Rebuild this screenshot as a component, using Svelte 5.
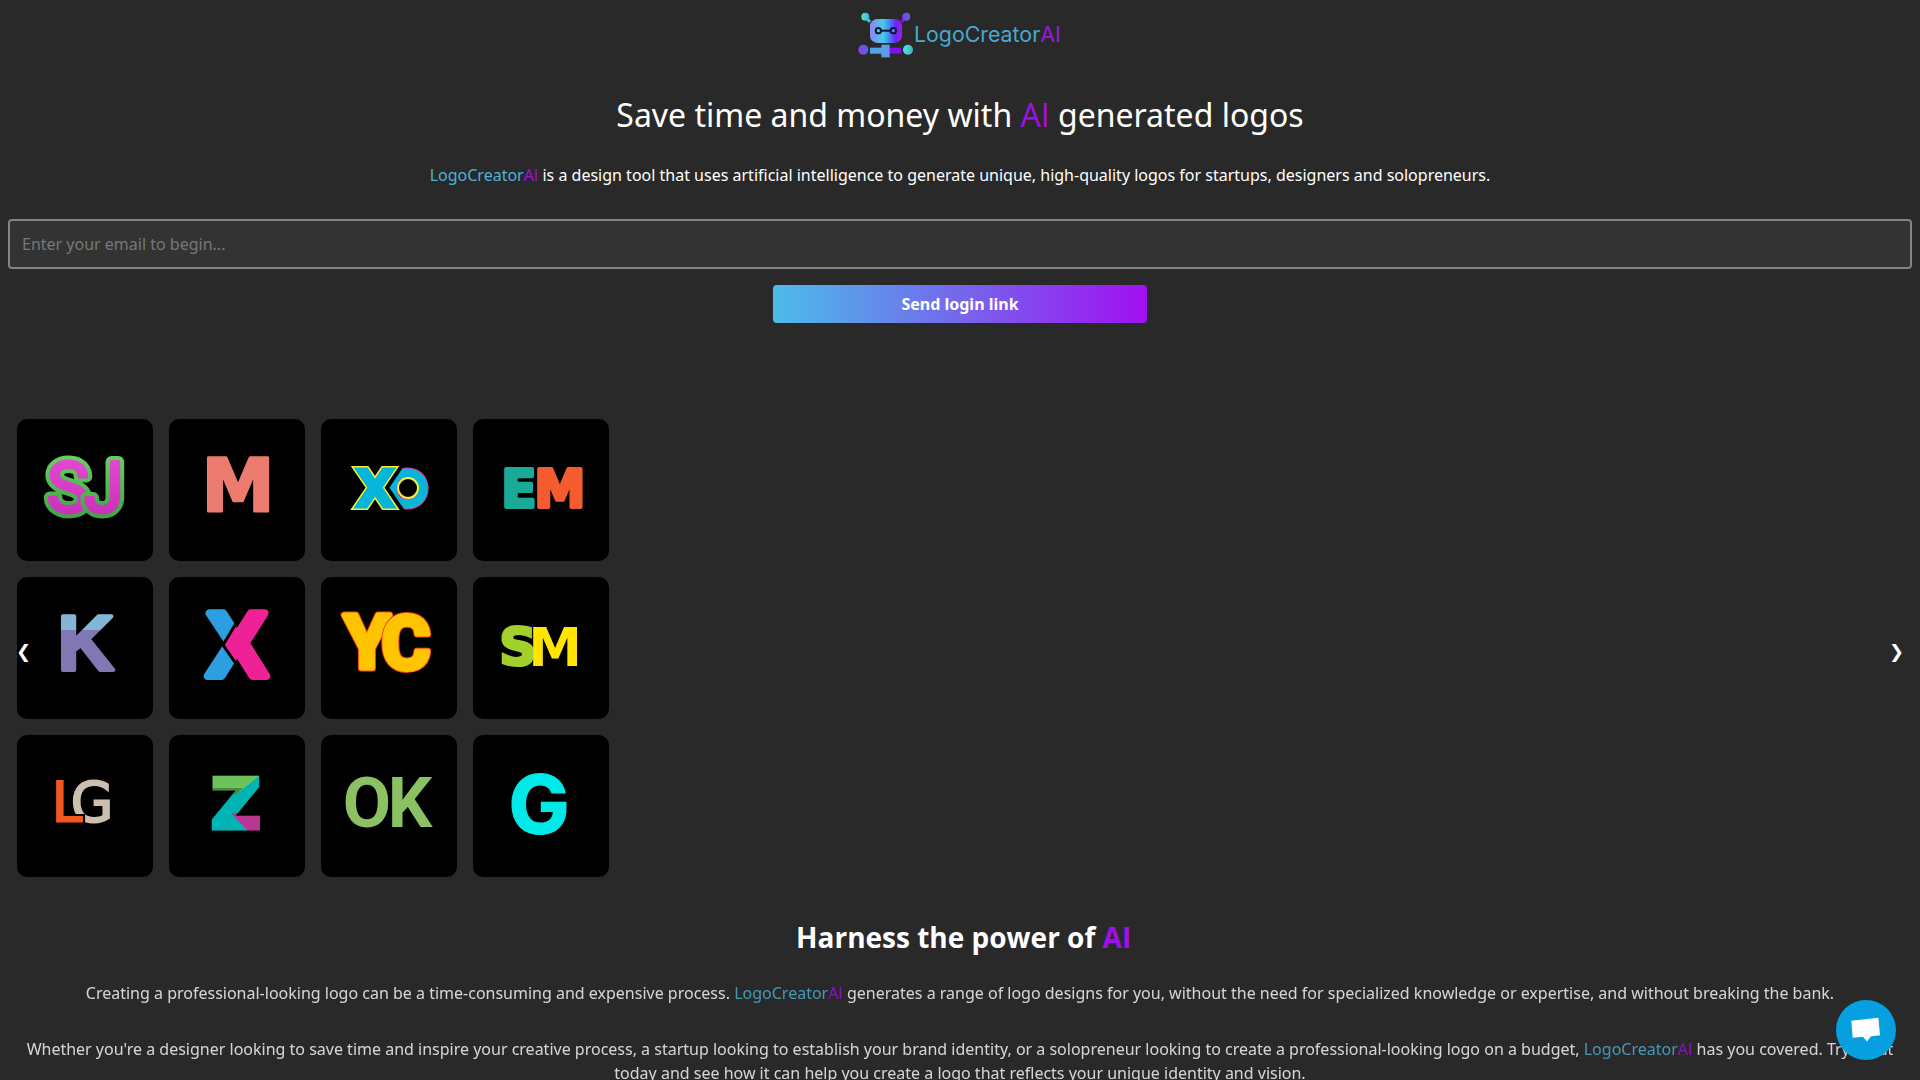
<script>
  let email = "";
  let sent = false;

  function sendLink() {
    sent = email.length > 0;
  }
</script>

{#snippet brand()}<span class="blue">LogoCreator</span><span class="purple">AI</span>{/snippet}

<main>
  <header>
    <svg class="brand" viewBox="54 30 615 150" role="img" aria-label="LogoCreatorAI">
      <defs>
        <linearGradient id="head">
          <stop offset="0" stop-color="#8b87f2" />
          <stop offset="0.4" stop-color="#4cc9ea" />
          <stop offset="0.55" stop-color="#3d9df0" />
          <stop offset="0.8" stop-color="#6a25f5" />
          <stop offset="1" stop-color="#a41af0" />
        </linearGradient>
        <linearGradient id="violet">
          <stop offset="0" stop-color="#8c3ff0" />
          <stop offset="1" stop-color="#5a5fe0" />
        </linearGradient>
        <linearGradient id="teal">
          <stop offset="0" stop-color="#5fe3d0" />
          <stop offset="1" stop-color="#35b5cf" />
        </linearGradient>
      </defs>
      <path d="M76 50 L90 66" stroke="#43c3d3" stroke-width="9" />
      <path d="M199 50 L184 66" stroke="#6a22dc" stroke-width="9" />
      <circle cx="76" cy="50" r="12" fill="url(#teal)" />
      <circle cx="199" cy="50" r="12" fill="url(#violet)" />
      <rect x="90" y="57" width="96" height="72" rx="22" fill="url(#head)" />
      <path d="M115 92 H160" stroke="#10163a" stroke-width="6" />
      <circle cx="115" cy="92" r="8" fill="#4bc4ee" stroke="#10163a" stroke-width="6" />
      <circle cx="160" cy="92" r="8" fill="#5d7ff2" stroke="#10163a" stroke-width="6" />
      <rect x="90" y="143" width="36" height="18" fill="#53a4e6" />
      <rect x="148" y="143" width="36" height="18" fill="#8110ee" />
      <rect x="124" y="134" width="25" height="38" fill="#5f9be8" />
      <circle cx="70" cy="149" r="15" fill="url(#violet)" />
      <circle cx="204" cy="149" r="15" fill="url(#teal)" />
      <text class="wordmark" x="222" y="126" fill="#4aa8d0">LogoCreator<tspan fill="#9a18dc">AI</tspan></text>
    </svg>
  </header>

  <section class="hero">
    <h1>Save time and money with <span class="purple">AI</span> generated logos</h1>
    <p>{@render brand()} is a design tool that uses artificial intelligence to generate unique, high-quality logos for startups, designers and solopreneurs.</p>
    <form on:submit|preventDefault={sendLink}>
      <input type="email" aria-label="Email" placeholder="Enter your email to begin..." bind:value={email} />
      <button class="send" type="submit">Send login link</button>
    </form>
  </section>

  <section class="slider" aria-label="Example logos">
    <div class="logos">
      <svg class="card" viewBox="0 0 136 142">
        <defs>
          <linearGradient id="sj-edge" x2="0" y2="1">
            <stop offset="0" stop-color="#6bd862" />
            <stop offset="1" stop-color="#3a9c40" />
          </linearGradient>
          <linearGradient id="sj-fill" x2="0" y2="1">
            <stop offset="0" stop-color="#ea4fd5" />
            <stop offset="1" stop-color="#c32bb4" />
          </linearGradient>
        </defs>
        <g class="roboto regular round" text-anchor="middle" font-size="71">
          <text x="51" y="93" stroke="url(#sj-edge)" stroke-width="12">S</text>
          <text x="51" y="93" fill="url(#sj-fill)" stroke="url(#sj-fill)" stroke-width="4">S</text>
          <text x="87" y="93" stroke="url(#sj-edge)" stroke-width="12">J</text>
          <text x="87" y="93" fill="url(#sj-fill)" stroke="url(#sj-fill)" stroke-width="4">J</text>
        </g>
      </svg>

      <svg class="card" viewBox="0 0 136 142">
        <text class="dejavu round" x="69" y="92" text-anchor="middle" font-size="73" fill="#ec7c70" stroke="#ec7c70" stroke-width="3">M</text>
      </svg>

      <svg class="card" viewBox="0 0 136 142">
        <g text-anchor="middle">
          <text class="lato" x="86" y="88" font-size="52" fill="#06b5d8" stroke="#e63ab0" stroke-width="5">O</text>
          <text class="lato" x="86" y="88" font-size="52" fill="#06b5d8" stroke="#06b5d8" stroke-width="3">O</text>
          <circle cx="87" cy="69" r="10" fill="#000" stroke="#f5f032" stroke-width="2" />
          <text class="dejavu" x="57" y="88" font-size="52" stroke="#000" stroke-width="9">X</text>
          <text class="dejavu" x="54" y="88" font-size="52" fill="#06b5d8" stroke="#f5f032" stroke-width="6">X</text>
          <text class="dejavu" x="54" y="88" font-size="52" fill="#06b5d8" stroke="#06b5d8" stroke-width="3">X</text>
        </g>
      </svg>

      <svg class="card" viewBox="0 0 136 142">
        <g class="dejavu round" text-anchor="middle" font-size="51" stroke-width="4">
          <text x="46" y="88" fill="#1aab98" stroke="#1aab98">E</text>
          <text x="87" y="88" fill="#f45c30" stroke="#f45c30">M</text>
        </g>
      </svg>

      <svg class="card" viewBox="0 0 136 142">
        <defs>
          <linearGradient id="k-fill" gradientUnits="userSpaceOnUse" x1="0" y1="0" x2="0" y2="142">
            <stop offset="0.37" stop-color="#82b5d6" />
            <stop offset="0.37" stop-color="#8078b4" />
          </linearGradient>
        </defs>
        <text class="liberation round" x="69" y="93" text-anchor="middle" font-size="78" fill="url(#k-fill)" stroke="url(#k-fill)" stroke-width="4">K</text>
      </svg>

      <svg class="card" viewBox="0 0 136 142">
        <mask id="x-mask" maskUnits="userSpaceOnUse" x="0" y="0" width="136" height="142">
          <text class="liberation round" x="68" y="99" text-anchor="middle" font-size="90" fill="#fff" stroke="#fff" stroke-width="8">X</text>
        </mask>
        <g mask="url(#x-mask)">
          <rect width="136" height="142" fill="#2b9fe2" />
          <path d="M80 25 L54 68 L86 114 H120 V25 Z" fill="#ee2196" stroke="#000" stroke-width="3" />
        </g>
      </svg>

      <svg class="card" viewBox="0 0 136 142">
        <g class="roboto round" text-anchor="middle" font-size="74">
          <text x="46" y="91" stroke="#ee4a10" stroke-width="7">Y</text>
          <text x="46" y="91" fill="#ffc400" stroke="#ffc400" stroke-width="5">Y</text>
          <text x="85" y="92" stroke="#ee4a10" stroke-width="7">C</text>
          <text x="85" y="92" fill="#ffc400" stroke="#ffc400" stroke-width="5">C</text>
        </g>
      </svg>

      <svg class="card" viewBox="0 0 136 142">
        <g class="dejavu" text-anchor="middle" stroke-width="3">
          <text x="45" y="88" font-size="52" fill="#a4d02c" stroke="#a4d02c">S</text>
          <text x="82" y="89" font-size="54" fill="#ffe500">M</text>
        </g>
      </svg>

      <svg class="card" viewBox="0 0 136 142">
        <g class="thin" text-anchor="middle" font-size="55">
          <text x="75" y="86" fill="#cdbfb0" stroke="#cdbfb0" stroke-width="2">G</text>
          <text x="50" y="86" stroke="#000" stroke-width="6">L</text>
          <text x="50" y="86" fill="#f2581f" stroke="#f2581f" stroke-width="2">L</text>
        </g>
      </svg>

      <svg class="card" viewBox="0 0 136 142">
        <mask id="z-mask" maskUnits="userSpaceOnUse" x="0" y="0" width="136" height="142">
          <text class="dejavu" x="67" y="93" text-anchor="middle" font-size="68" fill="#fff" stroke="#fff" stroke-width="5">Z</text>
        </mask>
        <g mask="url(#z-mask)">
          <rect width="136" height="142" fill="#00b3b5" />
          <path d="M40 36 H96 L68 59 H40 Z" fill="#6cc35c" />
          <path d="M40 53 H74 L68 59 H40 Z" fill="#468e42" />
          <path d="M62 78 H96 V98 H81 Z" fill="#b93692" />
        </g>
      </svg>

      <svg class="card" viewBox="0 0 136 142">
        <g class="roboto" text-anchor="middle" font-size="70">
          <text x="46" y="92" fill="#8bc163">O</text>
          <text x="89" y="92" fill="#8bc163">K</text>
        </g>
      </svg>

      <svg class="card" viewBox="0 0 136 142">
        <text class="inter" x="66" y="99" text-anchor="middle" font-size="82" fill="#00e8e8">G</text>
      </svg>
    </div>
    <button class="arrow prev" type="button" aria-label="Previous">❮</button>
    <button class="arrow next" type="button" aria-label="Next">❯</button>
  </section>

  <section class="about">
    <h2>&nbsp;Harness the power of <span class="purple">AI</span></h2>
    <p>Creating a professional-looking logo can be a time-consuming and expensive process. {@render brand()} generates a range of logo designs for you, without the need for specialized knowledge or expertise, and without breaking the bank.</p>
    <p>Whether you're a designer looking to save time and inspire your creative process, a startup looking to establish your brand identity, or a solopreneur looking to create a professional-looking logo on a budget, {@render brand()} has you covered. Try it out today and see how it can help you create a logo that reflects your unique identity and vision.</p>
  </section>
</main>

<button class="chat" type="button" aria-label="Open chat">
  <svg viewBox="0 0 90 80" width="30" height="27">
    <path d="M1 11 L82 2 L87 54 L60 57 L48 73 L36 59 L5 62 Z" fill="#fff" />
  </svg>
</button>

<style>
  :global(body) {
    background: #292929;
  }

  main {
    box-sizing: border-box;
    height: 100vh;
    overflow-y: auto;
    scrollbar-width: none;
    padding: 10px 8px 0;
    font-family: "Noto Sans", "Open Sans", sans-serif;
    font-size: 16px;
    line-height: 24px;
    color: #fff;
    text-align: center;
  }

  header {
    display: flex;
    justify-content: center;
  }

  .brand {
    width: 205px;
    height: 50px;
  }

  .wordmark {
    font-family: Inter, sans-serif;
    font-size: 64px;
    font-weight: 400;
  }

  .blue {
    color: #4bb4d8;
  }

  .purple {
    font-family: "Open Sans", sans-serif;
    color: #a010e8;
  }

  h1 {
    margin: 33px 0 26px;
    font-size: 32px;
    line-height: 44px;
    font-weight: 400;
  }

  p {
    margin: 0 0 32px;
  }

  form {
    display: flex;
    flex-direction: column;
    align-items: center;
    gap: 16px;
  }

  input {
    box-sizing: border-box;
    width: 100%;
    height: 50px;
    padding: 0 12px;
    border: 2px solid #848484;
    border-radius: 4px;
    background: #333;
    color: #fff;
    font: inherit;
  }

  input::placeholder {
    color: #777;
  }

  .send {
    width: 374px;
    height: 38px;
    border: none;
    border-radius: 4px;
    background: linear-gradient(90deg, #4bbde8, #a010f0);
    color: #fff;
    font: inherit;
    font-weight: 700;
  }

  .slider {
    position: relative;
    margin-top: 96px;
    padding: 0 9px 8px;
  }

  .logos {
    display: grid;
    grid-template-columns: repeat(4, 136px);
    gap: 16px;
  }

  .card {
    display: block;
    width: 136px;
    height: 142px;
    border-radius: 10px;
    background: #000;
  }

  .round {
    stroke-linejoin: round;
  }

  .dejavu {
    font-family: "DejaVu Sans", sans-serif;
    font-weight: 700;
  }

  .thin {
    font-family: "DejaVu Sans", sans-serif;
    font-weight: 400;
  }

  .liberation {
    font-family: "Liberation Sans", sans-serif;
    font-weight: 700;
  }

  .lato {
    font-family: Lato, sans-serif;
    font-weight: 700;
  }

  .roboto {
    font-family: Roboto, sans-serif;
    font-weight: 700;
  }

  .regular {
    font-weight: 400;
  }

  .inter {
    font-family: Inter, sans-serif;
    font-weight: 800;
  }

  .arrow {
    position: absolute;
    top: 50%;
    transform: translateY(-50%);
    padding: 8px;
    border: none;
    background: none;
    color: #fff;
    font: 700 18px/24px "DejaVu Sans", sans-serif;
  }

  .prev {
    left: 0;
  }

  .next {
    right: 0;
  }

  .about {
    margin-top: 32px;
  }

  .about p {
    opacity: 0.8;
  }

  h2 {
    margin: 0 0 24px;
    font-family: "Open Sans", sans-serif;
    font-size: 28px;
    line-height: 40px;
    font-weight: 700;
  }

  .chat {
    position: fixed;
    right: 24px;
    bottom: 20px;
    display: flex;
    align-items: center;
    justify-content: center;
    width: 60px;
    height: 60px;
    border: none;
    border-radius: 50%;
    background: #06a0e0;
  }
</style>
